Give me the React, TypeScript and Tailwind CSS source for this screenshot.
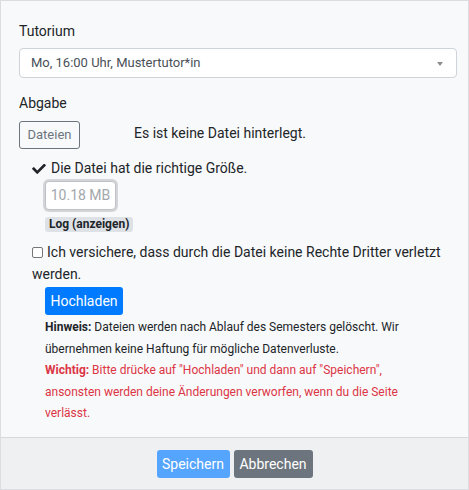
const CheckIcon = () => (
  <svg viewBox="0 0 512 370" className="w-[14px] h-[10px] shrink-0" fill="#212529">
    <path d="M173.9 363.4 7.5 197c-10-10-10-26.2 0-36.2l36.2-36.2c10-10 26.2-10 36.2 0L192 236.7 432.1-3.4c10-10 26.2-10 36.2 0L504.5 32.8c10 10 10 26.2 0 36.2L210.1 363.4c-10 10-26.2 10-36.2 0z" />
  </svg>
);

export default function App() {
  return (
    <div className="w-[469px] h-[490px] flex flex-col border border-[#dcdde0] bg-[#f8f9fa] font-['Roboto',sans-serif] text-[14px] text-[#212529]">
      <div className="flex-1 pt-[20px] pl-[18px] pr-[11px]">
        {/* Tutorium */}
        <label className="block leading-[21px] mb-[6px]">Tutorium</label>
        <div className="relative h-[30px] flex items-center rounded-[4px] border border-[#ced4da] bg-white pl-[11px] text-[13px] text-[#495057]">
          Mo, 16:00 Uhr, Mustertutor*in
          <span className="absolute right-[13px] top-[13px] w-0 h-0 border-l-[3.5px] border-r-[3.5px] border-t-[4px] border-l-transparent border-r-transparent border-t-[#8a8f94]" />
        </div>

        {/* Abgabe */}
        <label className="block leading-[21px] mt-[15px]">Abgabe</label>
        <div className="flex items-start mt-[7px]">
          <button className="h-[28px] w-[61px] rounded-[3px] border border-[#6c757d] text-[13px] text-[#6c757d]">
            Dateien
          </button>
          <span className="ml-[54px] pt-[2px] leading-[21px]">Es ist keine Datei hinterlegt.</span>
        </div>

        <div className="pl-[13px] mt-[9px]">
          <div className="flex items-center gap-[5px] leading-[21px]">
            <CheckIcon />
            <span>Die Datei hat die richtige Größe.</span>
          </div>
          <div className="pl-[13px]">
            <div className="mt-[2px] w-[71px] h-[29px] flex items-center justify-center rounded-[4px] border border-[#bfc2c5] bg-white shadow-[0_0_0_2px_#d3d5d8] text-[#a2a7ab]">
              10.18 MB
            </div>
            <span className="inline-block mt-[7px] px-[4px] rounded-[3px] bg-[#dee2e6] text-[12px] leading-[15px] font-bold">
              Log (anzeigen)
            </span>
          </div>

          <p className="mt-[7px] leading-[22px]">
            <span className="inline-block w-[11px] h-[11px] mr-[4px] align-[-1px] rounded-[2px] border border-[#767676] bg-white" />
            Ich versichere, dass durch die Datei keine Rechte Dritter verletzt werden.
          </p>

          <div className="pl-[13px]">
            <button className="mt-[2px] h-[28px] w-[78px] rounded-[3px] bg-[#007bff] text-white">Hochladen</button>
            {/* notes */}
            <div className="mt-[2px] w-[380px] text-[12px] leading-[21.5px]">
              <p>
                <b>Hinweis:</b> Dateien werden nach Ablauf des Semesters gelöscht. Wir übernehmen keine Haftung für
                mögliche Datenverluste.
              </p>
              <p className="text-[#dc3545]">
                <b>Wichtig:</b> Bitte drücke auf "Hochladen" und dann auf "Speichern", ansonsten werden deine
                Änderungen verworfen, wenn du die Seite verlässt.
              </p>
            </div>
          </div>
        </div>
      </div>

      {/* Footer */}
      <div className="h-[52px] border-t border-[#d6d8db] bg-[#eff0f1] flex justify-center gap-[4px] pt-[12px]">
        <button className="h-[28px] w-[73px] rounded-[3px] bg-[#55a5ff] text-white">Speichern</button>
        <button className="h-[28px] w-[79px] rounded-[3px] bg-[#6c757d] text-white">Abbrechen</button>
      </div>
    </div>
  );
}
